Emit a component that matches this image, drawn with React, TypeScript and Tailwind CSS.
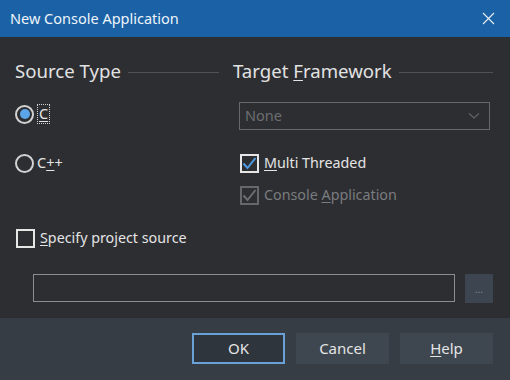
import React from 'react';

const font = { fontFamily: '"Noto Sans", "Open Sans", sans-serif' };

function Heading({ children }: { children: React.ReactNode }) {
  return (
    <div className="flex items-center gap-[7px] h-[24px]">
      <span className="text-[18.6px] leading-none text-[#e2e2e2] whitespace-nowrap">{children}</span>
      <div className="flex-1 h-px bg-[#4f5257] mt-[2px]" />
    </div>
  );
}

function Radio({ checked, children }: { checked?: boolean; children: React.ReactNode }) {
  return (
    <div className="flex items-center gap-[3px] h-[20px]">
      <div className="w-[19px] h-[19px] rounded-full border-2 border-[#d2d2d2] flex items-center justify-center">
        {checked && <div className="w-[10px] h-[10px] rounded-full bg-[#5ba6e8]" />}
      </div>
      {children}
    </div>
  );
}

function Check({ checked, disabled, children }: { checked?: boolean; disabled?: boolean; children: React.ReactNode }) {
  const box = disabled ? 'border-[#656769]' : 'border-[#e6e6e6]';
  const mark = disabled ? '#6b6d70' : '#4e9de2';
  return (
    <div className="flex items-center gap-[5px] h-[20px]">
      <div className={`w-[19px] h-[19px] border-2 ${box} flex items-center justify-center`}>
        {checked && (
          <svg width="15" height="15" viewBox="0 0 15 15">
            <path d="M1.5 7.5 L5.5 12 L13.5 2" fill="none" stroke={mark} strokeWidth="2" />
          </svg>
        )}
      </div>
      <span className={`text-[14.3px] ${disabled ? 'text-[#7a7c7f]' : 'text-[#e4e4e4]'}`}>{children}</span>
    </div>
  );
}

export default function App() {
  return (
    <div className="w-[510px] h-[380px] bg-[#2d2e32] flex flex-col overflow-hidden" style={font}>
      <div className="h-[37px] bg-[#1a62a5] flex items-center justify-between pl-[10px] pr-[15px]">
        <span className="text-[14.5px] text-[#eef4fa]">New Console Application</span>
        <svg width="13" height="13" viewBox="0 0 13 13">
          <path d="M1 1 L12 12 M12 1 L1 12" stroke="#e8eef5" strokeWidth="1.1" />
        </svg>
      </div>

      <div className="flex-1 flex flex-col pt-[22px] pl-[15px] pr-[17px]">
        <div className="grid grid-cols-[204px_1fr] gap-x-[14px]">
          <div className="flex flex-col">
            <Heading>Source Type</Heading>
            <div className="mt-[21px]">
              <Radio checked>
                <span className="text-[14.5px] text-[#e4e4e4] px-[1px] h-[20px] flex items-center border border-dotted border-[#d0d0d0]">
                  <span className="underline underline-offset-2">C</span>
                </span>
              </Radio>
            </div>
            <div className="mt-[29px]">
              <Radio>
                <span className="text-[14.5px] text-[#e4e4e4]">
                  C<span className="underline underline-offset-2">+</span>+
                </span>
              </Radio>
            </div>
          </div>
          <div className="flex flex-col">
            <Heading>
              Target <span className="underline underline-offset-2">F</span>ramework
            </Heading>
            <div className="mt-[19px] ml-[6px] mr-[3px] h-[28px] border border-[#65696e] flex items-center justify-between pl-[5px] pr-[9px]">
              <span className="text-[14.5px] text-[#6c6e71]">None</span>
              <svg width="12" height="8" viewBox="0 0 12 8">
                <path d="M1 1.5 L6 6 L11 1.5" fill="none" stroke="#606367" strokeWidth="1.3" />
              </svg>
            </div>
            <div className="mt-[23px] ml-[7px]">
              <Check checked>
                <span className="underline underline-offset-2">M</span>ulti Threaded
              </Check>
            </div>
            <div className="mt-[12px] ml-[7px]">
              <Check checked disabled>
                Console <span className="underline underline-offset-2">A</span>pplication
              </Check>
            </div>
          </div>
        </div>

        <div className="mt-[23px] ml-[1px]">
          <Check>
            <span className="underline underline-offset-2">S</span>pecify project source
          </Check>
        </div>

        <div className="mt-[26px] ml-[18px] flex gap-[10px]">
          <div className="flex-1 h-[28px] border border-[#8a8d92]" />
          <div className="w-[28px] h-[29px] bg-[#3c4550] flex items-center justify-center">
            <span className="text-[10px] text-[#7d8690] leading-none">...</span>
          </div>
        </div>
      </div>

      <div className="h-[62px] bg-[#363d45] flex items-center justify-end gap-[11px] pr-[17px] pb-[2px]">
        <div className="w-[93px] h-[31px] border-2 border-[#6aa2d8] bg-[#2f353c] flex items-center justify-center text-[15px] text-[#e4e4e4]">
          OK
        </div>
        <div className="w-[93px] h-[31px] bg-[#3e4750] flex items-center justify-center text-[15px] text-[#e4e4e4]">
          Cancel
        </div>
        <div className="w-[93px] h-[31px] bg-[#3e4750] flex items-center justify-center text-[15px] text-[#e4e4e4]">
          <span>
            <span className="underline underline-offset-2">H</span>elp
          </span>
        </div>
      </div>
    </div>
  );
}
